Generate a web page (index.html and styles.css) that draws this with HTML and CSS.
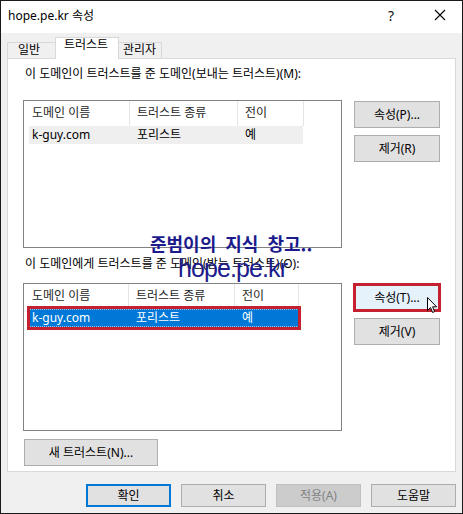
FILE: index.html
```html
<!DOCTYPE html>
<html lang="ko">
<head>
<meta charset="utf-8">
<title>hope.pe.kr 속성</title>
<link rel="stylesheet" href="styles.css">
</head>
<body>
<div class="window">
  <div class="titlebar">
    <span class="title">hope.pe.kr 속성</span>
    <span class="help">?</span>
    <span class="close"><svg width="12" height="12" viewBox="0 0 12 12"><path d="M1 1 L11 11 M11 1 L1 11" stroke="#000" stroke-width="1.1" fill="none"/></svg></span>
  </div>
  <div class="client">
    <div class="tabs">
      <div class="tab t-general">일반</div>
      <div class="tab active t-trust">트러스트</div>
      <div class="tab t-admin">관리자</div>
    </div>
    <div class="panel">
      <div class="label">이 도메인이 트러스트를 준 도메인(보내는 트러스트)(M):</div>
      <div class="section">
        <div class="list">
          <div class="lhead">
            <div class="c1">도메인 이름</div><div class="c2">트러스트 종류</div><div class="c3">전이</div>
          </div>
          <div class="row sel-idle">
            <div class="c1">k-guy.com</div><div class="c2">포리스트</div><div class="c3">예</div>
          </div>
        </div>
        <div class="side">
          <button class="btn">속성(P)...</button>
          <button class="btn">제거(R)</button>
        </div>
      </div>
      <div class="label label2">이 도메인에게 트러스트를 준 도메인(받는 트러스트)(O):</div>
      <div class="section section2">
        <div class="list list2">
          <div class="lhead">
            <div class="c1">도메인 이름</div><div class="c2">트러스트 종류</div><div class="c3">전이</div>
          </div>
          <div class="row sel-focus">
            <div class="c1">k-guy.com</div><div class="c2">포리스트</div><div class="c3">예</div>
          </div>
          <div class="redbox"></div>
        </div>
        <div class="side">
          <button class="btn hot">속성(T)...</button>
          <button class="btn">제거(V)</button>
        </div>
      </div>
      <button class="btn wide">새 트러스트(N)...</button>
    </div>
    <div class="footer">
      <button class="btn fbtn default">확인</button>
      <button class="btn fbtn">취소</button>
      <button class="btn fbtn disabled">적용(A)</button>
      <button class="btn fbtn">도움말</button>
    </div>
  </div>
  <div class="watermark">
    <div class="wm1">준범이의 지식 창고..</div>
    <div class="wm2">hope.pe.kr</div>
  </div>
  <svg class="cursor" width="11" height="17" viewBox="0 0 11 17"><path d="M0.5 0.5 L0.5 13.5 L3.5 10.5 L5.6 15.5 L7.6 14.6 L5.6 9.8 L9.6 9.8 Z" fill="#fff" stroke="#000" stroke-width="1" stroke-linejoin="miter"/></svg>
</div>
</body>
</html>
```
FILE: styles.css
```css
* { box-sizing: border-box; }
html, body { margin: 0; padding: 0; background: #fff; }
body {
  font-family: "Noto Sans", "Noto Sans CJK KR", sans-serif;
  font-size: 12px;
  color: #000;
}
.window {
  position: relative;
  width: 463px;
  height: 514px;
  border: 1px solid #1a1a1a;
  background: #f0f0f0;
  display: flex;
  flex-direction: column;
  overflow: hidden;
}
.titlebar {
  height: 32px;
  background: #fff;
  display: flex;
  align-items: center;
  padding-left: 7px;
  flex: none;
}
.title { font-size: 12px; line-height: 16px; margin-top: -3px; flex: 1; }
.help { font-size: 14px; line-height: 16px; width: 10px; margin-top: -3px; margin-right: 36px; color: #111; }
.close { width: 12px; height: 12px; margin-right: 16px; margin-top: -4px; display: flex; }
.client {
  flex: 1;
  display: flex;
  flex-direction: column;
  padding: 4px 6px 0 6px;
}
.tabs {
  display: flex;
  align-items: flex-end;
  height: 21px;
  flex: none;
}
.tab {
  height: 16px;
  border: 1px solid #d9d9d9;
  border-bottom: none;
  background: #f0f0f0;
  line-height: 14px;
  font-size: 12px;
  padding-left: 10px;
}
.t-general { width: 48px; border-right: none; }
.t-trust { width: 64px; }
.t-admin { width: 43px; border-left: none; padding-left: 4px; }
.tab.active {
  height: 22px;
  background: #fff;
  margin-bottom: -1px;
  position: relative;
  z-index: 2;
  padding-left: 8px;
  line-height: 14px;
}
.panel {
  height: 414px;
  width: 449px;
  background: #fff;
  border: 1px solid #d9d9d9;
  padding: 7px 0 0 15px;
  display: flex;
  flex-direction: column;
  align-items: flex-start;
}
.label {
  line-height: 16px;
  height: 16px;
  padding-left: 2px;
  white-space: nowrap;
}
.label2 { margin-top: 8px; }
.section {
  display: flex;
  gap: 12px;
  margin-top: 18px;
  align-items: flex-start;
}
.section2 { margin-top: 11px; }
.list {
  position: relative;
  width: 319px;
  height: 148px;
  border: 1px solid #828282;
  background: #fff;
}
.lhead {
  display: flex;
  height: 25px;
  color: #1e1e1e;
}
.lhead > div {
  border-right: 1px solid #e5e5e5;
  line-height: 24px;
  padding-left: 7px;
  white-space: nowrap;
}
.lhead .c1 { width: 106px; padding-left: 8px; }
.lhead .c2 { width: 108px; }
.lhead .c3 { width: 66px; }
.row {
  display: flex;
  height: 18px;
  margin-left: 5px;
  width: 274px;
}
.row > div { line-height: 17px; padding-left: 7px; white-space: nowrap; }
.row .c1 { width: 101px; padding-left: 3px; }
.row .c2 { width: 108px; }
.row .c3 { width: 65px; }
.sel-idle { background: #efefef; }
.list2 .lhead .c1 { width: 105px; }
.list2 .lhead .c2 { width: 106px; }
.list2 .lhead .c3 { width: 64px; }
.list2 .row { width: 270px; }
.list2 .row .c1 { width: 100px; }
.list2 .row .c2 { width: 106px; }
.list2 .row .c3 { width: 64px; }
.sel-focus {
  background: #0078d7;
  color: #fff;
  outline: 1px dotted #9fc6ea;
  outline-offset: -1px;
}
.redbox {
  position: absolute;
  left: 3px;
  top: 22px;
  width: 274px;
  height: 24px;
  border: 3px solid #c4202f;
}
.side {
  display: flex;
  flex-direction: column;
  gap: 7px;
  padding-top: 1px;
}
.btn {
  font-family: "Noto Sans", "Noto Sans CJK KR", sans-serif;
  font-size: 12px;
  color: #000;
  background: #e1e1e1;
  border: 1px solid #adadad;
  border-radius: 0;
  padding: 0;
  margin: 0;
  width: 86px;
  height: 27px;
  line-height: 16px;
  text-align: center;
}
.btn.hot {
  background: #e5f1fb;
  border-color: #0078d7;
  outline: 3px solid #c4202f;
  outline-offset: -2px;
}
.btn.wide {
  width: 134px;
  margin-top: 8px;
  margin-left: 1px;
}
.footer {
  display: flex;
  justify-content: flex-end;
  gap: 10px;
  margin-top: 12px;
  padding-right: 0;
}
.fbtn { width: 85px; height: 23px; }
.fbtn.default { border: 2px solid #0078d7; }
.fbtn.disabled { background: #cccccc; border-color: #bfbfbf; color: #838383; }
.watermark {
  position: absolute;
  left: 149px;
  top: 230px;
  color: #1b1b8c;
  pointer-events: none;
}
.wm1 {
  font-family: "Noto Sans CJK KR", sans-serif;
  font-weight: 700;
  font-size: 18px;
  line-height: 24px;
  word-spacing: 4px;
  white-space: nowrap;
}
.wm2 {
  font-family: "Liberation Sans", sans-serif;
  font-size: 25px;
  line-height: 26px;
  letter-spacing: -0.9px;
  margin-left: 28px;
  margin-top: 0px;
}
.cursor {
  position: absolute;
  left: 426px;
  top: 296px;
}
```
